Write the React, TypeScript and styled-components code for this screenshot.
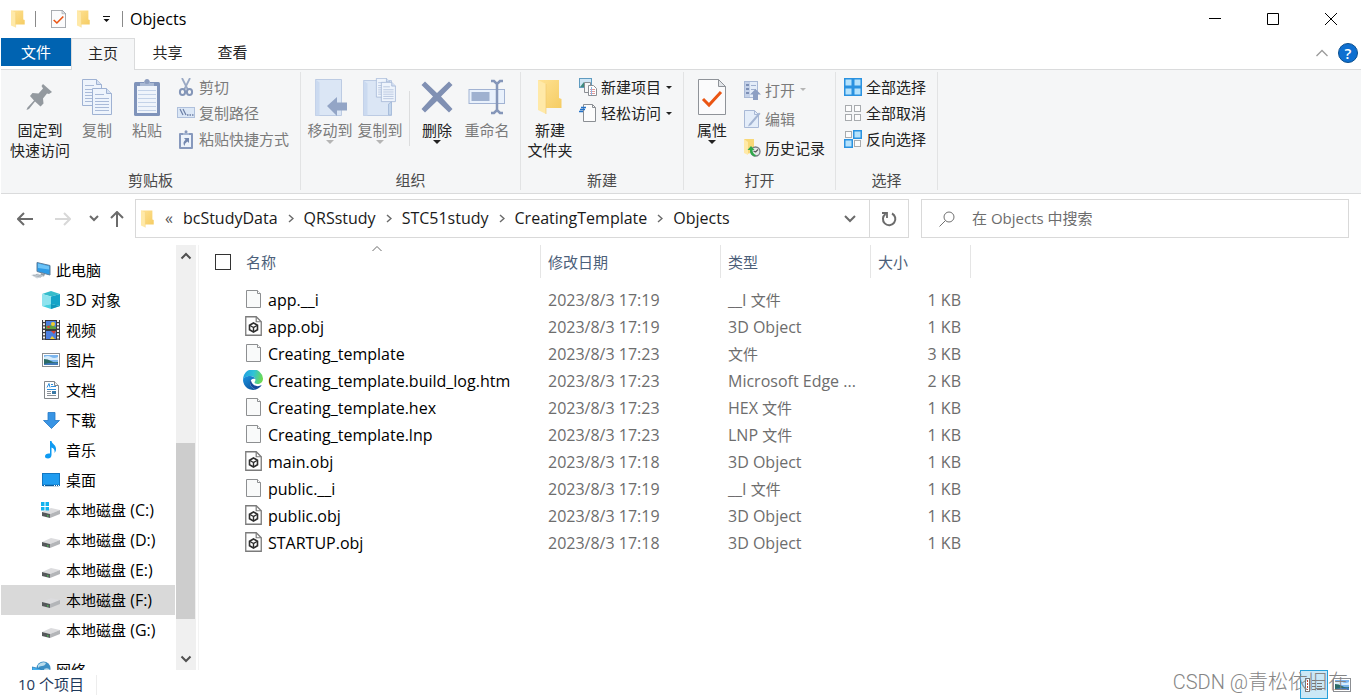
import React from "react";
import styled, { createGlobalStyle, css } from "styled-components";

const GlobalStyle = createGlobalStyle`
  * { box-sizing: border-box; }
  html, body { margin: 0; padding: 0; background: #fff; }
  body, button, input, table {
    font-family: "Open Sans", "Noto Sans CJK SC", sans-serif;
    font-size: 16px;
  }
  button {
    border: 0;
    padding: 0;
    background: none;
    color: inherit;
    white-space: nowrap;
  }
`;

/* ---------- text ---------- */

const Han = styled.span`
  font-size: 15px;
`;

/* Han characters are set one pixel smaller than the Latin text beside them. */
function Mixed({ children }: { children: string }) {
  return (
    <>
      {children.split(/([\u3400-\u9fff]+)/).map((part, i) =>
        i % 2 ? <Han key={i}>{part}</Han> : part
      )}
    </>
  );
}

/* ---------- icons ---------- */

function FolderIcon({ w, h }: { w: number; h: number }) {
  return (
    <svg width={w} height={h} viewBox="0 0 24 36" preserveAspectRatio="none" aria-hidden="true">
      <defs>
        <linearGradient id="folderFront" x1="0" y1="0" x2="1" y2="1">
          <stop offset="0" stopColor="#ffe294" />
          <stop offset="1" stopColor="#f5cc63" />
        </linearGradient>
      </defs>
      <path d="M0 1h21v18l2.500 1v9H6z" fill="url(#folderFront)" />
      <path d="M0 1l8 4v30l-8-4z" fill="#ffe9a8" />
      <path d="M8 5v30" stroke="#efc86a" strokeWidth="0.600" />
    </svg>
  );
}

function CheckDocIcon({ w, h }: { w: number; h: number }) {
  return (
    <svg width={w} height={h} viewBox="0 0 28 36" preserveAspectRatio="none" aria-hidden="true">
      <path d="M.5.5h20l7 7v28H.5z" fill="#fbfbfc" stroke="#8f9399" vectorEffect="non-scaling-stroke" />
      <path d="M20.500.5v7h7z" fill="#e3e6ea" stroke="#8f9399" />
      <path d="M5 20l6 6 12-13" fill="none" stroke="#ea5514" strokeWidth="3" />
    </svg>
  );
}

function PinIcon() {
  return (
    <svg width="28" height="26" viewBox="0 0 28 26" aria-hidden="true">
      <path
        d="M17 0l9 8-3 2-2-.5-4 5 .5 5-3 3-5.500-5L3 25l-2.500 1 1-2.500 6.500-7-4-4.500 2.500-3 6 .5 4.500-5L15.500 2z"
        fill="#93999f"
      />
    </svg>
  );
}

function Page({ x, y, s = 1 }: { x: number; y: number; s?: number }) {
  return (
    <g transform={`translate(${x} ${y}) scale(${s})`}>
      <path d="M.5.5h14l5 5v21H.5z" fill="#eef4fc" stroke="#9fb2d3" />
      <path d="M14.500.5v5h5" fill="#d4e0f2" stroke="#9fb2d3" />
      <path d="M3 6.500h9M3 10.500h14M3 13.500h14M3 16.500h14M3 19.500h14M3 22.500h14" stroke="#a9bad8" />
    </g>
  );
}

function CopyIcon() {
  return (
    <svg width="32" height="38" viewBox="0 0 32 38" aria-hidden="true">
      <Page x={1} y={1} />
      <Page x={11} y={10} />
    </svg>
  );
}

function PasteIcon() {
  return (
    <svg width="28" height="38" viewBox="0 0 28 38" aria-hidden="true">
      <rect x="1" y="4" width="26" height="34" rx="1.500" fill="#7f93ba" />
      <rect x="4" y="8" width="20" height="27" fill="#eff4fb" />
      <path d="M5 12.500h18M5 16.500h18M5 20.500h18M5 24.500h18M5 28.500h18M5 32.500h18" stroke="#c3d2e8" />
      <path d="M7 8V5h4a3 3 0 0 1 6 0h4v3z" fill="#a9b9d4" />
      <circle cx="14" cy="3.500" r="2.500" fill="#8c9dbf" />
    </svg>
  );
}

function MoveToIcon() {
  return (
    <svg width="34" height="38" viewBox="0 0 34 38" aria-hidden="true">
      <path d="M2.500 1.500h26v36h-26z" fill="#dbe6f5" stroke="#bccbe3" />
      <path d="M2.500 1.500l4 3v33h-4z" fill="#cbdaf0" />
      <path d="M14 28l10-9v5.500h10v8H24V38z" fill="#93a5c6" />
    </svg>
  );
}

function CopyToIcon() {
  return (
    <svg width="34" height="38" viewBox="0 0 34 38" aria-hidden="true">
      <path d="M.5 2.500h28v35H.5z" fill="#dbe6f5" stroke="#bccbe3" />
      <path d="M.5 2.500l4 3v32h-4z" fill="#cbdaf0" />
      <path d="M25.500 37v-11l3-2v13z" fill="#c4d6ec" stroke="#a9bedc" />
      <Page x={13} y={0} s={0.72} />
      <Page x={18} y={4} s={0.74} />
    </svg>
  );
}

function DeleteIcon() {
  return (
    <svg width="32" height="32" viewBox="0 0 32 32" aria-hidden="true">
      <path
        d="M4 .5L.5 4 12 15.500.5 28l3.500 3.500L16 20l12 11.500 3.500-3.500L20 15.500 31.500 4 28 .5 16 12z"
        fill="#8090b3"
      />
    </svg>
  );
}

function RenameIcon() {
  return (
    <svg width="38" height="36" viewBox="0 0 38 36" aria-hidden="true">
      <rect x="1" y="10.500" width="35.500" height="14" fill="#e9f1fc" stroke="#a2b3d3" />
      <rect x="3.500" y="13" width="18" height="9" fill="#9fb1d0" />
      <path d="M23 2h3l3 3 3-3h3M29 4v27M23 34h3l3-3 3 3h3" fill="none" stroke="#8596b9" strokeWidth="2.500" />
    </svg>
  );
}

function ScissorsIcon() {
  return (
    <svg width="16" height="18" viewBox="0 0 16 18" aria-hidden="true">
      <path d="M4 0l6 12M12 0L6 12" stroke="#9aa9c4" strokeWidth="1.800" />
      <ellipse cx="4.500" cy="14" rx="2.600" ry="3" fill="none" stroke="#8496b8" strokeWidth="2" />
      <ellipse cx="11.500" cy="14" rx="2.600" ry="3" fill="none" stroke="#8496b8" strokeWidth="2" />
    </svg>
  );
}

function CopyPathIcon() {
  return (
    <svg width="18" height="12" viewBox="0 0 18 12" aria-hidden="true">
      <rect x=".5" y=".5" width="17" height="10" fill="#dbe7f6" stroke="#afc0dc" />
      <path d="M3 2l3 6M6 2l3 6" stroke="#6d7fa6" strokeWidth="1.200" />
      <path d="M10 8h1.500M12.500 8H14M15 8h1.500" stroke="#6d7fa6" strokeWidth="1.500" />
    </svg>
  );
}

function PasteShortcutIcon() {
  return (
    <svg width="16" height="19" viewBox="0 0 16 19" aria-hidden="true">
      <rect x="1" y="3" width="14" height="16" rx="1" fill="#8799bd" />
      <rect x="3" y="5" width="10" height="12" fill="#edf3fb" />
      <path d="M5 5V3h2a1.500 1.500 0 0 1 2 0h2v2z" fill="#a6b6d2" />
      <circle cx="8" cy="1.800" r="1.500" fill="#8799bd" />
      <path d="M6 8h5v5l-1.600-1.600Q6.500 13 6.500 16q-2.500-3.500 1-6.300z" fill="#7488b0" />
    </svg>
  );
}

function NewItemIcon() {
  return (
    <svg width="18" height="18" viewBox="0 0 18 18" aria-hidden="true">
      <rect x=".5" y=".5" width="12" height="9" fill="#cfe6f5" stroke="#5f9bc0" />
      <path d="M1 9l4-5 4 5z" fill="#3f8a7c" />
      <path d="M5.500 4.500h6v10h-6z" fill="#f6f6f6" stroke="#8b8f94" />
      <path d="M9.500 7.500h5l3 3v7h-8z" fill="#fff" stroke="#8b8f94" />
      <path d="M11 11.500h5M11 13.500h5M11 15.500h5" stroke="#df9b9b" />
      <path d="M12.500 9v8" stroke="#8fb6e4" />
    </svg>
  );
}

function EasyAccessIcon() {
  return (
    <svg width="18" height="18" viewBox="0 0 18 18" aria-hidden="true">
      <path d="M4.500.5h9l3 3v14h-12z" fill="#fcfcfc" stroke="#8b8f94" />
      <path d="M13.500.5v3h3" fill="none" stroke="#8b8f94" />
      <path d="M2 3.500h5M1 5.500h5M0 7.500h4" stroke="#2372c8" strokeWidth="1.300" />
    </svg>
  );
}

function OpenIcon() {
  return (
    <svg width="18" height="20" viewBox="0 0 18 20" aria-hidden="true">
      <rect x="1.500" y="1.500" width="13" height="16" fill="#e4edf9" stroke="#a9b9d6" />
      <path d="M2 2h5v15H2z" fill="#c4d1e8" />
      <path d="M3 4h3v2H3zM3 8h3v2H3zM3 12h3v2H3z" fill="#7d90b6" />
      <path d="M8 5.500h5M8 9.500h5" stroke="#9fb0d0" />
      <path d="M12.500 9l5.500 5.500h-3V20h-5v-5.500H7z" fill="#8c9fc3" />
    </svg>
  );
}

function EditIcon() {
  return (
    <svg width="18" height="20" viewBox="0 0 18 20" aria-hidden="true">
      <path d="M1.500 1.500h10l4 4v13h-14z" fill="#e4edf9" stroke="#a9b9d6" />
      <path d="M11.500 1.500v4h4" fill="none" stroke="#a9b9d6" />
      <path d="M6 15L16 3.500l1.500 1.200L8 16l-3 1.500z" fill="#a3b4d2" />
    </svg>
  );
}

function HistoryIcon() {
  return (
    <svg width="18" height="18" viewBox="0 0 18 18" aria-hidden="true">
      <path d="M1 0h10v13l-7 2z" fill="#f8d877" />
      <path d="M1 0l4 3v13l-4-2z" fill="#ffe9a8" />
      <circle cx="12.500" cy="12.500" r="4.500" fill="#e6e8ea" stroke="#777d84" strokeWidth="1.300" />
      <path d="M12.500 13l2.500-2.500M12.500 13l-2-1" stroke="#555" strokeWidth="1.100" />
      <path d="M12 17.500Q6.500 16 7 11H4.500L8 7l3.500 4H9.500q0 3.500 3.500 5z" fill="#2fa84b" />
    </svg>
  );
}

const cellColours = {
  on: { fill: "#b5e2fc", stroke: "#2a92e0" },
  off: { fill: "#fcfcfc", stroke: "#a8abae" },
};

function SelectIcon({ cells }: { cells: boolean[] }) {
  return (
    <svg width="18" height="18" viewBox="0 0 18 18" aria-hidden="true">
      {cells.map((on, i) => {
        const c = on ? cellColours.on : cellColours.off;
        const x = (i % 2) * 9;
        const y = Math.floor(i / 2) * 9;
        return on ? (
          <rect key={i} x={x + 0.75} y={y + 0.75} width="7.500" height="7.500" fill={c.fill} stroke={c.stroke} strokeWidth="1.500" />
        ) : (
          <rect key={i} x={x + 1.5} y={y + 1.5} width="6" height="6" fill={c.fill} stroke={c.stroke} />
        );
      })}
    </svg>
  );
}

function Stroke({ w, h, d, colour, width = 1 }: { w: number; h: number; d: string; colour: string; width?: number }) {
  return (
    <svg width={w} height={h} viewBox={`0 0 ${w} ${h}`} aria-hidden="true">
      <path d={d} fill="none" stroke={colour} strokeWidth={width} />
    </svg>
  );
}

function BlankFileIcon() {
  return (
    <svg width="15" height="18" viewBox="0 0 15 18" aria-hidden="true">
      <path d="M.5.5h11l3 3v14H.5z" fill="#f9fafa" stroke="#8d8f91" />
      <path d="M11.500.5v3h3" fill="#fff" stroke="#8d8f91" />
    </svg>
  );
}

function ObjectFileIcon() {
  return (
    <svg width="17" height="20" viewBox="0 0 17 20" aria-hidden="true">
      <path d="M.75.75h10.500l5 5v13.500H.75z" fill="#fff" stroke="#7b7b7b" strokeWidth="1.300" />
      <path d="M11.200.75v5h5" fill="none" stroke="#7b7b7b" strokeWidth="1.200" />
      <path d="M8.500 7l4 2.200v4.600l-4 2.200-4-2.200V9.200z" fill="none" stroke="#2f2f2f" strokeWidth="1.600" />
      <path d="M5 9.500l3.500 2 3.500-2M8.500 11.500V16" fill="none" stroke="#2f2f2f" strokeWidth="1.400" />
    </svg>
  );
}

function EdgeIcon() {
  return (
    <svg width="20" height="20" viewBox="0 0 20 20" aria-hidden="true">
      <defs>
        <linearGradient id="edgeTop" x1="0" y1="0.300" x2="1" y2="0.500">
          <stop offset="0" stopColor="#1f9fe0" />
          <stop offset="0.500" stopColor="#2fc2d8" />
          <stop offset="1" stopColor="#6edb4e" />
        </linearGradient>
        <linearGradient id="edgeLeft" x1="0" y1="0" x2="0.600" y2="1">
          <stop offset="0" stopColor="#1b93e0" />
          <stop offset="1" stopColor="#0c59a4" />
        </linearGradient>
      </defs>
      <path d="M0 10a10 10 0 0 1 20-1.500c0 4-3 5.500-5.500 5.500-2 0-3-.8-3-1.500s.9-1 .9-2.500c0-2-2-4-5-4C3.500 6 .5 8 0 10z" fill="url(#edgeTop)" />
      <path d="M0 10C.5 7.500 3.500 6 7 6c2.500 0 4.500 1.200 5.200 3C9.500 7.800 7 10 7 12.500c0 3.500 3 6.500 6.500 6.800A10 10 0 0 1 0 10z" fill="url(#edgeLeft)" />
      <path d="M7.800 10C7 11 7 12 7 12.500c0 3.500 3 6.500 6.500 6.800 2.200-.7 4-2.200 5.200-4.200-4 2.400-9.700 1-10.900-5.100z" fill="#14499c" />
    </svg>
  );
}

function PcIcon() {
  return (
    <svg width="20" height="17" viewBox="0 0 20 17" aria-hidden="true">
      <path d="M6 .5l13 3v9.500L6 9.500z" fill="#2d9be6" stroke="#5d7f9c" />
      <path d="M7 1.500l11 2.700v3.300L7 6z" fill="#6cc3f7" />
      <path d="M10 11l4 1-1 2.500-4-1z" fill="#8f9aa3" />
      <path d="M0 13l7-1.500 6 2.500-7 2.500z" fill="#cfd6dc" />
      <path d="M2 13.200l8 2M5 12.400l6 1.800" stroke="#98a3ac" strokeWidth="0.700" />
    </svg>
  );
}

function CubeIcon() {
  return (
    <svg width="18" height="18" viewBox="0 0 18 18" aria-hidden="true">
      <path d="M9 0l9 3-9 2.500L0 3z" fill="#35bccb" />
      <path d="M0 3l9 2.500V13L0 15z" fill="#8ee3ee" />
      <path d="M18 3L9 5.500V13l9 2z" fill="#14a4c8" />
      <path d="M0 15l9-2 9 2-9 3z" fill="#46cfdf" />
      <path d="M9 13l9 2-9 3z" fill="#1096bb" />
    </svg>
  );
}

function VideoIcon() {
  return (
    <svg width="18" height="20" viewBox="0 0 18 20" aria-hidden="true">
      <path d="M0 0h18v20H0z" fill="#3a3a40" />
      <path d="M2 0v20M16 0v20" stroke="#f2f2f2" strokeWidth="2" strokeDasharray="2 1.300" />
      <path d="M4 1h10v8H4zM4 11h10v8H4z" fill="#4c7fe0" />
      <path d="M4 6l5-1 5 2v2H4z" fill="#5d9e3f" />
      <circle cx="11" cy="4" r="2" fill="#f1cf2c" />
      <circle cx="6.500" cy="7" r="1.300" fill="#d9402f" />
      <path d="M9 11h5l-2 3z" fill="#d9402f" />
      <path d="M8 19l2-3 3 3z" fill="#f1cf2c" />
    </svg>
  );
}

function PictureIcon({ w = 18, h = 14 }: { w?: number; h?: number }) {
  return (
    <svg width={w} height={h} viewBox="0 0 18 14" aria-hidden="true">
      <rect x=".5" y=".5" width="17" height="13" fill="#fff" stroke="#8c8f93" />
      <rect x="2" y="2" width="14" height="10" fill="#7cb6ee" />
      <path d="M2 4q4-2 7 0t7 0v3H2z" fill="#d7ecfb" />
      <path d="M2 6q4 0 7 2t7 1v3H2z" fill="#2b6b66" />
      <path d="M2 11q7-2 14-1v2H2z" fill="#3f79b8" />
    </svg>
  );
}

function DocumentIcon() {
  return (
    <svg width="15" height="18" viewBox="0 0 15 18" aria-hidden="true">
      <path d="M.5.5h10l4 4v13H.5z" fill="#fff" stroke="#83878b" />
      <path d="M10.500.5v4h4" fill="#eee" stroke="#83878b" />
      <path d="M3 6.500l2-4 1 4M7 3.500h2M7 5.500h5M3 8.500h9" fill="none" stroke="#2f8fdd" />
      <path d="M3 10.500h4M3 12.500h4M3 14.500h9" stroke="#8a9097" />
      <path d="M8 10h4v3H8z" fill="#3c7aa6" />
    </svg>
  );
}

function DownloadIcon() {
  return (
    <svg width="17" height="17" viewBox="0 0 17 17" aria-hidden="true">
      <path d="M5 .5h7v8h4.500l-8 8-8-8H5z" fill="#3894e4" stroke="#2379c6" strokeWidth="0.800" />
    </svg>
  );
}

function MusicIcon() {
  return (
    <svg width="12" height="18" viewBox="0 0 12 18" aria-hidden="true">
      <path d="M5 0h1.500c.3 3 5 4 4.500 8.500 0 1.500-.8 2.500-1.500 3.500.5-3-.5-4.500-3-5.500V14c0 2.500-1.800 3.500-3.500 3.500C1 17.500 0 16.500 0 15.200 0 13.500 2 12 5 12.500z" fill="#0f9bf2" />
    </svg>
  );
}

function DesktopIcon() {
  return (
    <svg width="18" height="14" viewBox="0 0 18 14" aria-hidden="true">
      <rect x=".5" y=".5" width="17" height="12" fill="#1f9cf0" stroke="#1277c2" />
      <path d="M1 12.500h16" stroke="#0b5a99" strokeWidth="1.500" />
      <path d="M2 12.500h1M12 12.500h1M14 12.500h1M16 12.500h1" stroke="#fff" />
    </svg>
  );
}

function DiskIcon({ system = false }: { system?: boolean }) {
  return (
    <svg width="20" height="16" viewBox="0 0 20 16" aria-hidden="true">
      <path d="M1 10l9-4 9 2-10 4z" fill="#dcdcde" />
      <path d="M1 10l8 2v4l-8-2z" fill="#55585b" />
      <path d="M9 12l10-4v4L9 16z" fill="#b3b5b8" />
      <path d="M6 13.200l1.500.4v1L6 14.200z" fill="#45e04a" />
      {system && <path d="M0 0h3.500v4H0zM4.500 0H8v4H4.500zM0 5h3.500v3.500H0zM4.500 5H8v3.500H4.500z" fill="#12b3ee" />}
    </svg>
  );
}

function NetworkIcon() {
  return (
    <svg width="19" height="19" viewBox="0 0 19 19" aria-hidden="true">
      <circle cx="11.500" cy="7.500" r="7" fill="#3c8fc4" />
      <path d="M6 4q4-4 8-2-1 3-4 3t-4 2zM12 8q4-2 6 1-1 4-4 5z" fill="#b9dcec" />
      <path d="M0 6l9 2v7l-9-2z" fill="#46b0f0" stroke="#2b7db5" strokeWidth="0.800" />
    </svg>
  );
}

function DetailsViewIcon() {
  return (
    <svg width="18" height="14" viewBox="0 0 18 14" aria-hidden="true">
      <rect x=".5" y=".5" width="4" height="13" fill="#fff" stroke="#777" />
      <path d="M2.500 2v10" stroke="#c2452d" strokeDasharray="2 1" />
      <path d="M7 2.500h4M7 5.500h4M7 8.500h4M7 11.500h4M12 2.500h5M12 5.500h5M12 8.500h5M12 11.500h5" stroke="#777" />
    </svg>
  );
}

/* ---------- window frame ---------- */

const Window = styled.div`
  display: flex;
  flex-direction: column;
  height: 100vh;
  padding-left: 1px;
  overflow: hidden;
  position: relative;
  background: #fff;
  color: #000;
`;

const TitleBar = styled.header`
  display: flex;
  align-items: center;
  flex: none;
  height: 38px;
  padding: 0 1px 0 10px;
`;

const QuickAccess = styled.div`
  display: flex;
  align-items: center;
  gap: 10px;
  margin-right: 7px;
`;

const QuickButton = styled.button<{ $narrow?: boolean }>`
  display: flex;
  align-items: center;
  justify-content: center;
  width: ${(p) => (p.$narrow ? 11 : 15)}px;
  height: 22px;
`;

const QuickDivider = styled.span<{ $gap?: boolean }>`
  width: 1px;
  height: 16px;
  background: #8a8a8a;
  margin-right: ${(p) => (p.$gap ? 5 : 0)}px;
`;

const WindowTitle = styled.h1`
  flex: 1;
  margin: 0;
  font-size: 16px;
  font-weight: 400;
  line-height: 22px;
`;

const FrameButton = styled.button`
  display: flex;
  align-items: center;
  justify-content: center;
  width: 58px;
  height: 38px;
`;

/* ---------- ribbon ---------- */

const TabBar = styled.nav`
  display: flex;
  flex: none;
  height: 32px;
  border-bottom: 1px solid #dadbdc;
`;

const Tab = styled.button<{ $kind?: "file" | "active" }>`
  width: 65px;
  height: 31px;
  padding-bottom: 3px;
  font-size: 15px;
  line-height: 28px;
  color: #262626;
  ${(p) =>
    p.$kind === "file" &&
    css`
      width: 70px;
      height: 28px;
      padding-bottom: 0;
      background: #0063b1;
      color: #fff;
    `}
  ${(p) =>
    p.$kind === "active" &&
    css`
      width: 64px;
      height: 32px;
      background: #f5f6f7;
      border: 1px solid #dadbdc;
      border-bottom: 0;
    `}
`;

const TabTools = styled.div`
  display: flex;
  align-items: center;
  gap: 10px;
  margin-left: auto;
  padding: 0 3px 1px 0;
`;

const Help = styled.button`
  width: 20px;
  height: 20px;
  border-radius: 50%;
  border: 1px solid #0a4f8f;
  background: #0e6fd0;
  color: #fff;
  font-size: 15px;
  font-weight: 600;
  line-height: 18px;
`;

const Ribbon = styled.section`
  display: flex;
  flex: none;
  padding: 2px 0 3px;
  background: #f5f6f7;
  border-bottom: 1px solid #dadbdc;
`;

const Group = styled.div<{ $left: number; $right: number }>`
  display: flex;
  flex-direction: column;
  justify-content: space-between;
  border-right: 1px solid #e2e3e4;
  padding-top: 2px;
  height: 118px;
  & > div {
    padding: 0 ${(p) => p.$right}px 0 ${(p) => p.$left}px;
  }
`;

const Commands = styled.div`
  display: flex;
  align-items: flex-start;
`;

const GroupLabel = styled.span`
  font-size: 15px;
  line-height: 20px;
  text-align: center;
  color: #4a4a4a;
`;

const BigButton = styled.button<{ $wide?: boolean; $dim?: boolean }>`
  display: flex;
  flex-direction: column;
  align-items: center;
  width: ${(p) => (p.$wide ? 64 : 50)}px;
  font-size: 15px;
  line-height: 20px;
  color: ${(p) => (p.$dim ? "#7b7b7b" : "#222")};
`;

const BigIcon = styled.span`
  display: flex;
  align-items: center;
  justify-content: center;
  height: 46px;
`;

const SmallColumn = styled.div<{ $tall?: boolean; $gap?: number }>`
  display: grid;
  grid-auto-rows: ${(p) => (p.$tall ? 29 : 26)}px;
  padding-top: ${(p) => (p.$tall ? 1 : 0)}px;
  margin-left: ${(p) => p.$gap ?? 0}px;
`;

const SmallButton = styled.button<{ $dim?: boolean }>`
  display: flex;
  align-items: center;
  font-size: 15px;
  line-height: 26px;
  color: ${(p) => (p.$dim ? "#7b7b7b" : "#222")};
`;

const SmallIcon = styled.span`
  display: flex;
  align-items: center;
  justify-content: center;
  width: 18px;
  margin-right: 4px;
`;

const CommandDivider = styled.span`
  width: 1px;
  height: 55px;
  margin: 17px 2px 0 4px;
  background: #dcddde;
`;

const Triangle = styled.span<{ $dim?: boolean; $inline?: boolean }>`
  border: 4px solid transparent;
  border-top-color: ${(p) => (p.$dim ? "#b5b5b5" : "#222")};
  border-bottom: 0;
  ${(p) =>
    p.$inline &&
    css`
      border-width: 3px 3px 0;
      margin-left: 5px;
    `}
`;

/* ---------- address row ---------- */

const AddressRow = styled.div`
  display: flex;
  flex: none;
  align-items: center;
  padding: 5px 12px 7px 12px;
`;

const NavButtons = styled.div`
  display: flex;
  flex: none;
  align-items: center;
`;

const NavButton = styled.button<{ $w: number }>`
  display: flex;
  align-items: center;
  justify-content: center;
  width: ${(p) => p.$w}px;
  height: 30px;
`;

const AddressBox = styled.div`
  display: flex;
  align-items: center;
  flex: 767 1 0;
  min-width: 0;
  height: 39px;
  border: 1px solid #d9d9d9;
  padding-left: 5px;
  overflow: hidden;
`;

const Crumbs = styled.div`
  display: flex;
  align-items: center;
  flex: 1;
  min-width: 0;
`;

const Overflow = styled.span`
  margin: 0 10px 0 11px;
  padding-bottom: 2px;
  line-height: 20px;
  color: #555;
`;

const Crumb = styled.a`
  padding-bottom: 2px;
  color: #1a1a1a;
  text-decoration: none;
  line-height: 24px;
`;

const CrumbArrow = styled.span`
  display: flex;
  justify-content: center;
  width: 26px;
`;

const BoxButton = styled.button<{ $line?: boolean }>`
  display: flex;
  align-items: center;
  justify-content: center;
  flex: none;
  width: ${(p) => (p.$line ? 39 : 38)}px;
  height: 37px;
  border-left: ${(p) => (p.$line ? "1px solid #d9d9d9" : "0")};
`;

const SearchBox = styled.label`
  display: flex;
  align-items: center;
  flex: 409 1 0;
  min-width: 0;
  height: 39px;
  margin-left: 12px;
  padding-left: 17px;
  gap: 17px;
  border: 1px solid #d9d9d9;
`;

const SearchInput = styled.input`
  flex: 1;
  min-width: 0;
  border: 0;
  padding: 0 0 2px;
  outline: 0;
  background: none;
  font-size: 15px;
  &::placeholder {
    color: #6d6d6d;
    opacity: 1;
  }
`;

/* ---------- body ---------- */

const Body = styled.div`
  display: flex;
  flex: 1;
  min-height: 0;
`;

const Tree = styled.nav`
  flex: none;
  width: 174px;
  padding-top: 10px;
  overflow: hidden;
`;

const TreeItem = styled.a<{ $level: number; $selected?: boolean; $spaced?: boolean }>`
  display: flex;
  align-items: center;
  height: 30px;
  margin-top: ${(p) => (p.$spaced ? 10 : 0)}px;
  padding-left: ${(p) => (p.$level ? 40 : 30)}px;
  background: ${(p) => (p.$selected ? "#d9d9d9" : "none")};
  color: #000;
  text-decoration: none;
  white-space: nowrap;
`;

const TreeIcon = styled.span`
  display: flex;
  align-items: center;
  justify-content: center;
  width: 20px;
  margin-right: 5px;
`;

const ScrollTrack = styled.div`
  display: flex;
  flex-direction: column;
  align-items: center;
  flex: none;
  width: 20px;
  margin: 0 2px 0 1px;
  background: #f0f0f0;
`;

const ScrollSpace = styled.div<{ $grow: number; $thumb?: boolean }>`
  flex: ${(p) => p.$grow} 1 0;
  align-self: stretch;
  margin-right: 1px;
  background: ${(p) => (p.$thumb ? "#cdcdcd" : "none")};
`;

const ScrollButton = styled.button`
  display: flex;
  align-items: center;
  justify-content: center;
  width: 20px;
  height: 22px;
`;

const Files = styled.main`
  flex: 1;
  min-width: 0;
  border-left: 1px solid #f3f3f3;
`;

const Table = styled.table`
  width: 100%;
  table-layout: fixed;
  border-collapse: collapse;
`;

const Col = styled.col<{ $w?: number }>`
  width: ${(p) => (p.$w ? `${p.$w}px` : "auto")};
`;

const Head = styled.th`
  height: 41px;
  padding: 0;
  vertical-align: top;
  font-weight: 400;
  text-align: left;
`;

const HeadCell = styled.div<{ $first?: boolean }>`
  position: relative;
  display: flex;
  align-items: center;
  height: 33px;
  padding-left: ${(p) => (p.$first ? 16 : 7)}px;
  border-right: 1px solid #e5e5e5;
  font-size: 15px;
  line-height: 32px;
  color: #4c607a;
`;

const SelectAll = styled.input`
  appearance: none;
  width: 16px;
  height: 16px;
  margin: 0 15px 0 0;
  border: 1px solid #333;
  background: #fff;
`;

const SortMark = styled.span`
  position: absolute;
  top: 0;
  left: 173px;
  line-height: 0;
`;

const Cell = styled.td<{ $right?: boolean }>`
  height: 27px;
  padding: 0 ${(p) => (p.$right ? 10 : 0)}px 0 7px;
  line-height: 26px;
  text-align: ${(p) => (p.$right ? "right" : "left")};
  color: #6d6d6d;
  white-space: nowrap;
`;

const FileName = styled.div`
  display: flex;
  align-items: center;
  padding-left: 37px;
  color: #000;
`;

const FileIcon = styled.span`
  display: flex;
  justify-content: center;
  width: 20px;
  margin-right: 5px;
  padding-bottom: 2px;
`;

/* ---------- status bar ---------- */

const StatusBar = styled.footer`
  display: flex;
  align-items: center;
  flex: none;
  height: 30px;
  padding: 0 9px 0 17px;
  font-size: 15px;
  color: #1e395b;
`;

const StatusCount = styled.span`
  padding: 0 12px 2px 0;
  border-right: 1px solid #ededed;
  line-height: 18px;
`;

const ViewButtons = styled.div`
  display: flex;
  align-items: flex-start;
  gap: 4px;
  height: 30px;
  margin-left: auto;
`;

const ViewButton = styled.button<{ $on?: boolean }>`
  display: flex;
  align-items: center;
  justify-content: center;
  width: ${(p) => (p.$on ? 28 : 20)}px;
  height: 29px;
  border: ${(p) => (p.$on ? "1px solid #26a0da" : "0")};
  background: ${(p) => (p.$on ? "#cbe8f6" : "none")};
`;

const Watermark = styled.span`
  position: absolute;
  right: 13px;
  bottom: 4px;
  font-family: Roboto, "Noto Sans CJK SC", sans-serif;
  font-weight: 300;
  font-size: 20px;
  line-height: 28px;
  color: #858585;
  pointer-events: none;
`;

/* ---------- data ---------- */

const crumbs = ["bcStudyData", "QRSstudy", "STC51study", "CreatingTemplate", "Objects"];

const tree = [
  { label: "此电脑", icon: <PcIcon />, level: 0 },
  { label: "3D 对象", icon: <CubeIcon />, level: 1 },
  { label: "视频", icon: <VideoIcon />, level: 1 },
  { label: "图片", icon: <PictureIcon />, level: 1 },
  { label: "文档", icon: <DocumentIcon />, level: 1 },
  { label: "下载", icon: <DownloadIcon />, level: 1 },
  { label: "音乐", icon: <MusicIcon />, level: 1 },
  { label: "桌面", icon: <DesktopIcon />, level: 1 },
  { label: "本地磁盘 (C:)", icon: <DiskIcon system />, level: 1 },
  { label: "本地磁盘 (D:)", icon: <DiskIcon />, level: 1 },
  { label: "本地磁盘 (E:)", icon: <DiskIcon />, level: 1 },
  { label: "本地磁盘 (F:)", icon: <DiskIcon />, level: 1, selected: true },
  { label: "本地磁盘 (G:)", icon: <DiskIcon />, level: 1 },
  { label: "网络", icon: <NetworkIcon />, level: 0, spaced: true },
];

const fileIcons = { blank: <BlankFileIcon />, object: <ObjectFileIcon />, edge: <EdgeIcon /> };

const files: { name: string; icon: keyof typeof fileIcons; date: string; type: string; size: string }[] = [
  { name: "app.__i", icon: "blank", date: "2023/8/3 17:19", type: "__I 文件", size: "1 KB" },
  { name: "app.obj", icon: "object", date: "2023/8/3 17:19", type: "3D Object", size: "1 KB" },
  { name: "Creating_template", icon: "blank", date: "2023/8/3 17:23", type: "文件", size: "3 KB" },
  { name: "Creating_template.build_log.htm", icon: "edge", date: "2023/8/3 17:23", type: "Microsoft Edge ...", size: "2 KB" },
  { name: "Creating_template.hex", icon: "blank", date: "2023/8/3 17:23", type: "HEX 文件", size: "1 KB" },
  { name: "Creating_template.lnp", icon: "blank", date: "2023/8/3 17:23", type: "LNP 文件", size: "1 KB" },
  { name: "main.obj", icon: "object", date: "2023/8/3 17:18", type: "3D Object", size: "1 KB" },
  { name: "public.__i", icon: "blank", date: "2023/8/3 17:19", type: "__I 文件", size: "1 KB" },
  { name: "public.obj", icon: "object", date: "2023/8/3 17:19", type: "3D Object", size: "1 KB" },
  { name: "STARTUP.obj", icon: "object", date: "2023/8/3 17:18", type: "3D Object", size: "1 KB" },
];

/* ---------- parts ---------- */

function Big(props: { icon: React.ReactNode; lines: string[]; wide?: boolean; dim?: boolean; menu?: "dim" | "dark" }) {
  return (
    <BigButton $wide={props.wide} $dim={props.dim}>
      <BigIcon>{props.icon}</BigIcon>
      {props.lines.map((line) => (
        <span key={line}>{line}</span>
      ))}
      {props.menu && <Triangle $dim={props.menu === "dim"} />}
    </BigButton>
  );
}

function Small(props: { icon: React.ReactNode; label: string; dim?: boolean; menu?: boolean }) {
  return (
    <SmallButton $dim={props.dim}>
      <SmallIcon>{props.icon}</SmallIcon>
      {props.label}
      {props.menu && <Triangle $inline $dim={props.dim} />}
    </SmallButton>
  );
}

function RibbonPanel() {
  return (
    <Ribbon>
      <Group $left={7} $right={11}>
        <Commands>
          <Big wide icon={<PinIcon />} lines={["固定到", "快速访问"]} />
          <Big dim icon={<CopyIcon />} lines={["复制"]} />
          <Big dim icon={<PasteIcon />} lines={["粘贴"]} />
          <SmallColumn $gap={5}>
            <Small dim icon={<ScissorsIcon />} label="剪切" />
            <Small dim icon={<CopyPathIcon />} label="复制路径" />
            <Small dim icon={<PasteShortcutIcon />} label="粘贴快捷方式" />
          </SmallColumn>
        </Commands>
        <GroupLabel>剪贴板</GroupLabel>
      </Group>
      <Group $left={4} $right={8}>
        <Commands>
          <Big dim icon={<MoveToIcon />} lines={["移动到"]} menu="dim" />
          <Big dim icon={<CopyToIcon />} lines={["复制到"]} menu="dim" />
          <CommandDivider />
          <Big icon={<DeleteIcon />} lines={["删除"]} menu="dark" />
          <Big dim icon={<RenameIcon />} lines={["重命名"]} />
        </Commands>
        <GroupLabel>组织</GroupLabel>
      </Group>
      <Group $left={4} $right={11}>
        <Commands>
          <Big icon={<FolderIcon w={24} h={36} />} lines={["新建", "文件夹"]} />
          <SmallColumn $gap={4}>
            <Small icon={<NewItemIcon />} label="新建项目" menu />
            <Small icon={<EasyAccessIcon />} label="轻松访问" menu />
          </SmallColumn>
        </Commands>
        <GroupLabel>新建</GroupLabel>
      </Group>
      <Group $left={3} $right={10}>
        <Commands>
          <Big icon={<CheckDocIcon w={28} h={36} />} lines={["属性"]} menu="dark" />
          <SmallColumn $tall $gap={6}>
            <Small dim icon={<OpenIcon />} label="打开" menu />
            <Small dim icon={<EditIcon />} label="编辑" />
            <Small icon={<HistoryIcon />} label="历史记录" />
          </SmallColumn>
        </Commands>
        <GroupLabel>打开</GroupLabel>
      </Group>
      <Group $left={8} $right={11}>
        <Commands>
          <SmallColumn>
            <Small icon={<SelectIcon cells={[true, true, true, true]} />} label="全部选择" />
            <Small icon={<SelectIcon cells={[false, false, false, false]} />} label="全部取消" />
            <Small icon={<SelectIcon cells={[false, true, true, false]} />} label="反向选择" />
          </SmallColumn>
        </Commands>
        <GroupLabel>选择</GroupLabel>
      </Group>
    </Ribbon>
  );
}

function Address() {
  return (
    <AddressRow>
      <NavButtons>
        <NavButton $w={24} aria-label="后退">
          <Stroke w={16} h={14} d="M7 1L1 7l6 6M1 7h15" colour="#6b6b6b" width={2} />
        </NavButton>
        <NavButton $w={52} aria-label="前进">
          <Stroke w={16} h={14} d="M9 1l6 6-6 6M15 7H0" colour="#d8d8d8" width={2} />
        </NavButton>
        <NavButton $w={10} aria-label="最近位置">
          <Stroke w={10} h={7} d="M1 1l4 4 4-4" colour="#6b6b6b" width={2} />
        </NavButton>
        <NavButton $w={36} aria-label="上移">
          <Stroke w={14} h={16} d="M1 7l6-6 6 6M7 1v15" colour="#6b6b6b" width={2} />
        </NavButton>
      </NavButtons>
      <AddressBox>
        <Crumbs>
          <FolderIcon w={13} h={18} />
          <Overflow>«</Overflow>
          {crumbs.map((name, i) => (
            <React.Fragment key={name}>
              {i > 0 && (
                <CrumbArrow>
                  <Stroke w={6} h={9} d="M1 1l4 3.500-4 3.500" colour="#6b6b6b" width={1.5} />
                </CrumbArrow>
              )}
              <Crumb href="#">{name}</Crumb>
            </React.Fragment>
          ))}
        </Crumbs>
        <BoxButton aria-label="展开">
          <Stroke w={12} h={8} d="M1 1l5 5 5-5" colour="#6b6b6b" width={2} />
        </BoxButton>
        <BoxButton $line aria-label="刷新">
          <svg width="16" height="16" viewBox="0 0 16 16" aria-hidden="true">
            <path d="M11 2.500A6.200 6.200 0 1 1 4.500 3" fill="none" stroke="#6b6b6b" strokeWidth="2" />
            <path d="M1 2h5v5" fill="none" stroke="#6b6b6b" strokeWidth="1.800" />
          </svg>
        </BoxButton>
      </AddressBox>
      <SearchBox>
        <svg width="16" height="16" viewBox="0 0 16 16" aria-hidden="true">
          <circle cx="10" cy="6" r="5" fill="none" stroke="#707070" />
          <path d="M6.500 9.500L.5 15.500" stroke="#707070" />
        </svg>
        <SearchInput type="text" placeholder="在 Objects 中搜索" aria-label="搜索" />
      </SearchBox>
    </AddressRow>
  );
}

export default function App() {
  return (
    <Window>
      <GlobalStyle />
      <TitleBar>
        <QuickAccess>
          <FolderIcon w={14} h={18} />
          <QuickDivider $gap />
          <QuickButton aria-label="属性">
            <CheckDocIcon w={15} h={18} />
          </QuickButton>
          <QuickButton aria-label="新建文件夹">
            <FolderIcon w={13} h={18} />
          </QuickButton>
          <QuickButton $narrow aria-label="自定义快速访问工具栏">
            <svg width="7" height="6" viewBox="0 0 7 6" aria-hidden="true">
              <path d="M0 0h7v1H0zM.5 3h6L3.500 6z" fill="#111" />
            </svg>
          </QuickButton>
          <QuickDivider />
        </QuickAccess>
        <WindowTitle>Objects</WindowTitle>
        <FrameButton aria-label="最小化">
          <Stroke w={12} h={13} d="M0 5.500h12" colour="#000" />
        </FrameButton>
        <FrameButton aria-label="最大化">
          <Stroke w={12} h={12} d="M.5.5h11v11H.5z" colour="#000" />
        </FrameButton>
        <FrameButton aria-label="关闭">
          <Stroke w={12} h={12} d="M0 0l12 12M12 0L0 12" colour="#000" />
        </FrameButton>
      </TitleBar>
      <TabBar>
        <Tab $kind="file">文件</Tab>
        <Tab $kind="active">主页</Tab>
        <Tab>共享</Tab>
        <Tab>查看</Tab>
        <TabTools>
          <Stroke w={12} h={8} d="M.5 7L6 1.500 11.500 7" colour="#9b9b9b" width={1.3} />
          <Help aria-label="帮助">?</Help>
        </TabTools>
      </TabBar>
      <RibbonPanel />
      <Address />
      <Body>
        <Tree>
          {tree.map((item) => (
            <TreeItem key={item.label} href="#" $level={item.level} $selected={item.selected} $spaced={item.spaced}>
              <TreeIcon>{item.icon}</TreeIcon>
              <span>
                <Mixed>{item.label}</Mixed>
              </span>
            </TreeItem>
          ))}
        </Tree>
        <ScrollTrack>
          <ScrollButton aria-label="向上滚动">
            <Stroke w={12} h={8} d="M1.500 6.500L6 2l4.500 4.500" colour="#505050" width={2} />
          </ScrollButton>
          <ScrollSpace $grow={176} />
          <ScrollSpace $grow={176} $thumb />
          <ScrollSpace $grow={29} />
          <ScrollButton aria-label="向下滚动">
            <Stroke w={12} h={8} d="M1.500 1.500L6 6l4.500-4.500" colour="#505050" width={2} />
          </ScrollButton>
        </ScrollTrack>
        <Files>
          <Table>
            <colgroup>
              <Col $w={342} />
              <Col $w={180} />
              <Col $w={150} />
              <Col $w={100} />
              <Col />
            </colgroup>
            <thead>
              <tr>
                <Head>
                  <HeadCell $first>
                    <SelectAll type="checkbox" aria-label="全选" />
                    名称
                    <SortMark>
                      <Stroke w={10} h={7} d="M.5 6L5 1.500 9.500 6" colour="#6b6b6b" />
                    </SortMark>
                  </HeadCell>
                </Head>
                <Head>
                  <HeadCell>修改日期</HeadCell>
                </Head>
                <Head>
                  <HeadCell>类型</HeadCell>
                </Head>
                <Head>
                  <HeadCell>大小</HeadCell>
                </Head>
                <Head />
              </tr>
            </thead>
            <tbody>
              {files.map((file) => (
                <tr key={file.name}>
                  <Cell>
                    <FileName>
                      <FileIcon>{fileIcons[file.icon]}</FileIcon>
                      {file.name}
                    </FileName>
                  </Cell>
                  <Cell>{file.date}</Cell>
                  <Cell>
                    <Mixed>{file.type}</Mixed>
                  </Cell>
                  <Cell $right>{file.size}</Cell>
                  <td />
                </tr>
              ))}
            </tbody>
          </Table>
        </Files>
      </Body>
      <StatusBar>
        <StatusCount>10 个项目</StatusCount>
        <ViewButtons>
          <ViewButton $on aria-label="详细信息">
            <DetailsViewIcon />
          </ViewButton>
          <ViewButton aria-label="大缩略图">
            <PictureIcon />
          </ViewButton>
        </ViewButtons>
      </StatusBar>
      <Watermark>CSDN @青松依旧在</Watermark>
    </Window>
  );
}
